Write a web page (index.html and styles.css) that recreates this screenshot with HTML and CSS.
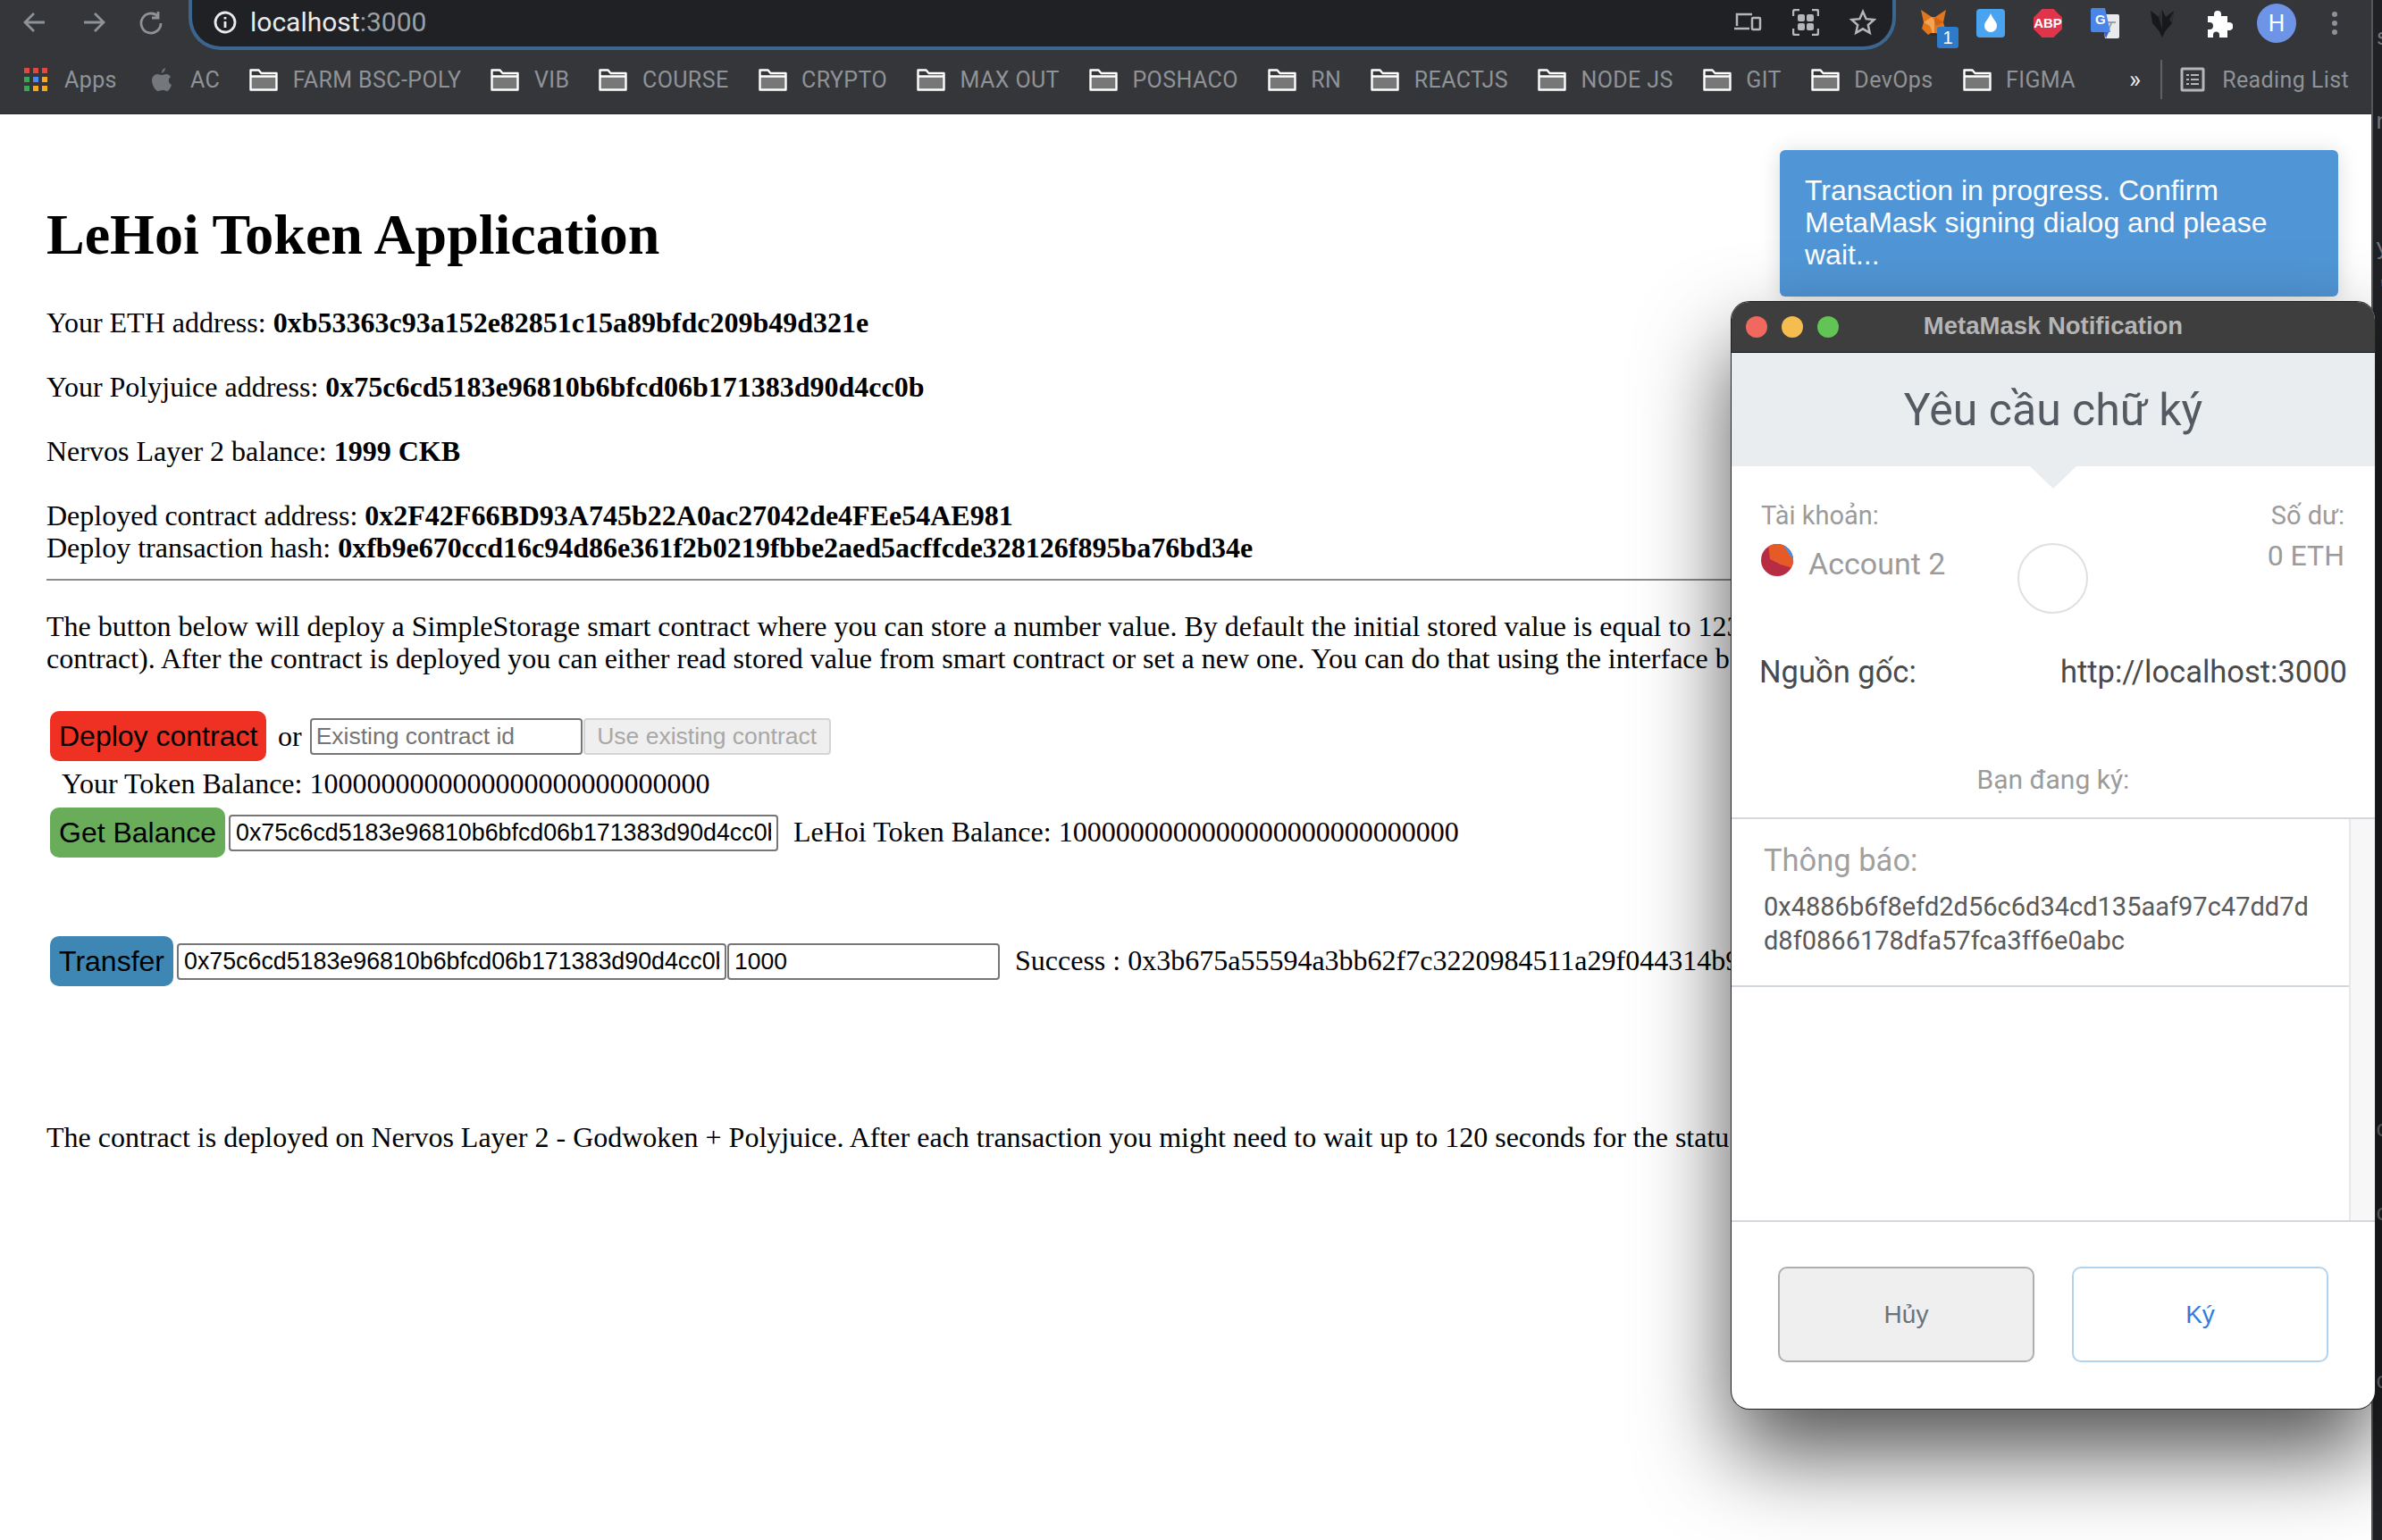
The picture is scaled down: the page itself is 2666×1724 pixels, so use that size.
FILE: index.html
```html
<!DOCTYPE html>
<html>

<head>
    <title>LeHoi Token Application</title>
    <link rel="stylesheet" href="styles.css">
</head>

<body>
    <div class="browser">
        <header class="toolbar">
            <svg class="nav-icon" width="26" height="26" viewBox="0 0 26 26"><path d="M24 13H3M12 3L2 13l10 10"/></svg>
            <svg class="nav-icon" width="26" height="26" viewBox="0 0 26 26"><path d="M2 13h21M14 3l10 10-10 10"/></svg>
            <svg class="nav-icon nav-reload" width="28" height="28" viewBox="0 0 28 28"><path d="M25 14a11 11 0 1 1-3.500-8M22 1v7h-7"/></svg>

            <div class="address-bar">
                <svg class="info-icon" width="26" height="26" viewBox="0 0 26 26"><circle cx="13" cy="13" r="11"/><path d="M13 12v7M13 7v2.500"/></svg>
                <span class="host">localhost<span class="port">:3000</span></span>
                <span class="address-tools">
                    <svg width="32" height="22" viewBox="0 0 32 22"><path class="tool-line" d="M4 15V2h17M1 18h17"/><rect class="tool-line" x="21" y="6" width="9" height="13" rx="1"/></svg>
                    <svg width="30" height="30" viewBox="0 0 30 30"><path class="tool-line" d="M1 8V3a2 2 0 0 1 2-2h5M22 1h5a2 2 0 0 1 2 2v5M29 22v5a2 2 0 0 1-2 2h-5M8 29H3a2 2 0 0 1-2-2v-5"/><rect class="tool-fill" x="6" y="6" width="8" height="8" rx="2"/><rect class="tool-fill" x="16" y="6" width="8" height="8" rx="2"/><rect class="tool-fill" x="6" y="16" width="8" height="8" rx="2"/><rect class="tool-fill" x="16" y="16" width="8" height="8" rx="2"/></svg>
                    <svg width="30" height="30" viewBox="0 0 30 30"><path class="tool-line" d="M15 3l3.600 8.200 8.900.9-6.700 5.900 1.900 8.800-7.700-4.500-7.700 4.500 1.900-8.800-6.700-5.900 8.900-.9z"/></svg>
                </span>
            </div>

            <div class="extensions">
                <span class="ext ext-fox">
                    <svg width="32" height="32" viewBox="0 0 32 32"><path fill="#e2761b" d="M2 1l12 8h4l12-8-3 14 2 7-7 7-3-2h-6l-3 2-7-7 2-7z"/><path fill="#f6a351" d="M14 9l-9 6 7 4 3 8h2V13z"/><path fill="#cd6116" d="M18 9l9 6-8 4-2-6z"/><path fill="#3a2a20" d="M13 27h6v3h-6z"/></svg>
                    <span class="ext-badge">1</span>
                </span>
                <span class="ext ext-drop">
                    <svg width="16" height="22" viewBox="0 0 16 22"><path fill="#fff" d="M8 0c2 6 7 9 7 14a7 7 0 0 1-14 0C1 9 6 6 8 0z"/></svg>
                </span>
                <span class="ext ext-abp">ABP</span>
                <span class="ext">
                    <svg width="32" height="34" viewBox="0 0 32 34"><path fill="#e8eaed" d="M12 7h18a2 2 0 0 1 2 2v23a2 2 0 0 1-2 2H16z"/><path fill="#9aa0a6" d="M18 15h10v2h-4l-3 7-2-1 3-6h-4z"/><path fill="#3a5fc8" d="M14 25h7l-4 9z"/><path fill="#4a86e8" d="M2 0h14l6 27H2a2 2 0 0 1-2-2V2a2 2 0 0 1 2-2z"/><text class="ext-g" x="5" y="18">G</text></svg>
                </span>
                <span class="ext">
                    <svg width="32" height="32" viewBox="0 0 32 32"><path fill="#17181a" d="M3 2l9 7 4-8 4 8 9-7-2 14-7 8-4 8-4-8-7-8z"/><path fill="#2e2f33" d="M12 9l4-8v22zM24 12l5-10-2 14z"/></svg>
                </span>
                <span class="ext ext-puzzle">
                    <svg width="30" height="32" viewBox="0 0 30 32"><path fill="#fff" d="M2 8h7V6a4 4 0 0 1 8 0v2h7v7h2a4.500 4.500 0 0 1 0 9h-2v8H15v-3a3.500 3.500 0 0 0-7 0v3H2v-9h2a4 4 0 0 0 0-8H2z"/></svg>
                </span>
                <span class="avatar">H</span>
                <span class="menu-dots"><i></i><i></i><i></i></span>
            </div>
        </header>

        <nav class="bookmarks">
            <span class="bookmark bookmark-apps">
                <svg width="26" height="26" viewBox="0 0 26 26"><path fill="#e8453c" d="M0 0h6v6H0zM10 0h6v6h-6zM20 0h6v6h-6z"/><path fill="#3aa757" d="M0 10h6v6H0z"/><path fill="#4a8af4" d="M10 10h6v6h-6z"/><path fill="#f5a623" d="M20 10h6v6h-6z"/><path fill="#3aa757" d="M0 20h6v6H0z"/><path fill="#f5a623" d="M10 20h6v6h-6zM20 20h6v6h-6z"/></svg>
                Apps
            </span>
            <span class="bookmark bookmark-apple">
                <svg width="22" height="26" viewBox="0 0 22 26"><path fill="#74777b" d="M15 0c0 3-2 5-4 6 0-3 1-5 4-6zM11 8c2 0 3-1 5-1s4 1 5 3c-3 2-3 7 1 9-1 3-3 7-5 7s-2-1-5-1-3 1-5 1c-3 0-7-7-7-12 0-4 3-7 6-7 2 0 3 1 5 1z"/></svg>
                AC
            </span>
            <span class="bookmark"><svg class="folder" width="32" height="25" viewBox="0 0 32 25"><use href="#folder"/></svg>FARM BSC-POLY</span>
            <span class="bookmark"><svg class="folder" width="32" height="25" viewBox="0 0 32 25"><use href="#folder"/></svg>VIB</span>
            <span class="bookmark"><svg class="folder" width="32" height="25" viewBox="0 0 32 25"><use href="#folder"/></svg>COURSE</span>
            <span class="bookmark"><svg class="folder" width="32" height="25" viewBox="0 0 32 25"><use href="#folder"/></svg>CRYPTO</span>
            <span class="bookmark"><svg class="folder" width="32" height="25" viewBox="0 0 32 25"><use href="#folder"/></svg>MAX OUT</span>
            <span class="bookmark"><svg class="folder" width="32" height="25" viewBox="0 0 32 25"><use href="#folder"/></svg>POSHACO</span>
            <span class="bookmark"><svg class="folder" width="32" height="25" viewBox="0 0 32 25"><use href="#folder"/></svg>RN</span>
            <span class="bookmark"><svg class="folder" width="32" height="25" viewBox="0 0 32 25"><use href="#folder"/></svg>REACTJS</span>
            <span class="bookmark"><svg class="folder" width="32" height="25" viewBox="0 0 32 25"><use href="#folder"/></svg>NODE JS</span>
            <span class="bookmark"><svg class="folder" width="32" height="25" viewBox="0 0 32 25"><use href="#folder"/></svg>GIT</span>
            <span class="bookmark"><svg class="folder" width="32" height="25" viewBox="0 0 32 25"><use href="#folder"/></svg>DevOps</span>
            <span class="bookmark"><svg class="folder" width="32" height="25" viewBox="0 0 32 25"><use href="#folder"/></svg>FIGMA</span>
            <span class="more">&raquo;</span>
            <span class="bookmark bookmark-reading">
                <svg width="28" height="28" viewBox="0 0 28 28"><rect x="2" y="2" width="24" height="24" rx="1" fill="none" stroke="#b4b6b8" stroke-width="3"/><path fill="#b4b6b8" d="M7 8h3v2H7zM12 8h9v2h-9zM7 13h3v2H7zM12 13h9v2h-9zM7 18h3v2H7zM12 18h9v2h-9z"/></svg>
                Reading List
            </span>
        </nav>

        <main class="page">
            <h1 class="page-title">LeHoi Token Application</h1>

            <div class="info-line">Your ETH address: <b>0xb53363c93a152e82851c15a89bfdc209b49d321e</b></div>
            <div class="info-line">Your Polyjuice address: <b>0x75c6cd5183e96810b6bfcd06b171383d90d4cc0b</b></div>
            <div class="info-line">Nervos Layer 2 balance: <b>1999 CKB</b></div>
            <div>Deployed contract address: <b>0x2F42F66BD93A745b22A0ac27042de4FEe54AE981</b></div>
            <div>Deploy transaction hash: <b>0xfb9e670ccd16c94d86e361f2b0219fbbe2aed5acffcde328126f895ba76bd34e</b></div>

            <hr class="rule">

            <p class="intro">
                The button below will deploy a SimpleStorage smart contract where you can store a number value. By default the initial stored value is equal to 123<br>
                contract). After the contract is deployed you can either read stored value from smart contract or set a new one. You can do that using the interface b
            </p>

            <div class="action-row action-deploy">
                <button class="btn btn-red">Deploy contract</button>
                <span class="or">or</span>
                <input class="field field-contract" placeholder="Existing contract id">
                <button class="btn-disabled" disabled>Use existing contract</button>
            </div>

            <div class="token-balance">Your Token Balance: 1000000000000000000000000000</div>

            <div class="action-row action-balance">
                <button class="btn btn-green">Get Balance</button>
                <input class="field field-address" value="0x75c6cd5183e96810b6bfcd06b171383d90d4cc0b">
                <span class="row-text">LeHoi Token Balance: 1000000000000000000000000000</span>
            </div>

            <div class="action-row action-transfer">
                <button class="btn btn-blue">Transfer</button>
                <input class="field field-address" value="0x75c6cd5183e96810b6bfcd06b171383d90d4cc0b">
                <input class="field field-amount" value="1000">
                <span class="row-text">Success : 0x3b675a55594a3bb62f7c3220984511a29f044314b9</span>
            </div>

            <p class="status-note">The contract is deployed on Nervos Layer 2 - Godwoken + Polyjuice. After each transaction you might need to wait up to 120 seconds for the statu</p>
        </main>
    </div>

    <div class="edge">s

ng


y
'



















c

c



c</div>

    <div class="toast">Transaction in progress. Confirm MetaMask signing dialog and please wait...</div>

    <section class="mm-window">
        <div class="mm-titlebar">
            <span class="light light-red"></span>
            <span class="light light-yellow"></span>
            <span class="light light-green"></span>
            <span class="mm-title">MetaMask Notification</span>
        </div>

        <div class="mm-head">Yêu cầu chữ ký</div>

        <div class="mm-account">
            <div>
                <div class="mm-label">Tài khoản:</div>
                <div class="mm-account-name">
                    <svg width="36" height="36" viewBox="0 0 36 36"><defs><clipPath id="blockie"><ellipse cx="18" cy="18" rx="18" ry="18"/></clipPath></defs><g clip-path="url(#blockie)"><path fill="#b72b43" d="M0 0h36v36H0z"/><path fill="#e65a28" d="M8 0h28v27l-14-4-12-6z"/><path fill="#4a90e2" d="M24 0h12v18z"/></g></svg>
                    <span class="mm-account-text">Account 2</span>
                </div>
            </div>
            <div class="mm-circle"></div>
            <div class="mm-balance">
                <div class="mm-label">Số dư:</div>
                <div class="mm-eth">0 ETH</div>
            </div>
        </div>

        <div class="mm-origin">
            <span>Nguồn gốc:</span>
            <span>http://localhost:3000</span>
        </div>

        <div class="mm-signing">Bạn đang ký:</div>

        <div class="mm-body">
            <div class="mm-content">
                <div class="mm-message">
                    <div class="mm-message-label">Thông báo:</div>
                    <div class="mm-hex">0x4886b6f8efd2d56c6d34cd135aaf97c47dd7d<br>d8f0866178dfa57fca3ff6e0abc</div>
                </div>
            </div>
            <div class="mm-scroll"></div>
        </div>

        <div class="mm-footer">
            <button class="mm-btn mm-cancel">Hủy</button>
            <button class="mm-btn mm-sign">Ký</button>
        </div>
    </section>

    <svg class="sprites" width="0" height="0">
        <symbol id="folder" viewBox="0 0 32 25">
            <path fill="#777" d="M1.500 8h29v15.500h-29z"/>
            <path fill="none" stroke="#fff" stroke-width="2.400" stroke-linejoin="round" d="M1.500 1.500h9l3 3.500h17v18.500h-29zM1.500 8.500h29"/>
        </symbol>
    </svg>
</body>

</html>
```

FILE: styles.css
```css
* {
    box-sizing: border-box;
}

html,
body {
    margin: 0;
    padding: 0;
    height: 1724px;
    overflow: hidden;
}

body {
    display: flex;
    position: relative;
    width: 2666px;
    background: #202124;
    font-family: "Liberation Serif", serif;
    font-size: 32px;
    line-height: 36px;
    color: #000;
}

.sprites {
    position: absolute;
}

.browser {
    display: flex;
    flex-direction: column;
    width: 2656px;
    height: 1724px;
    border-right: 2px solid #55565a;
}

.edge {
    flex: 1;
    padding: 20px 0 0 3px;
    overflow: hidden;
    color: #74787e;
    font: 26px/47px "Liberation Mono", monospace;
    white-space: pre;
}

/* chrome toolbar */
.toolbar {
    display: flex;
    align-items: flex-start;
    height: 56px;
    background: #35363a;
}

.nav-icon {
    margin: 12px 14px 0 26px;
    flex: none;
}

.nav-reload {
    margin-left: 23px;
    margin-right: 17px;
}

.nav-icon path,
.info-icon path,
.info-icon circle {
    fill: none;
    stroke: #8e9196;
    stroke-width: 2.800;
}

.address-bar {
    display: flex;
    align-items: center;
    flex: none;
    width: 1911px;
    height: 56px;
    margin-left: 11px;
    padding: 0 18px 3px 24px;
    background: #202124;
    border: 4px solid #3b6690;
    border-top: none;
    border-radius: 0 0 36px 36px;
}

.info-icon path,
.info-icon circle {
    stroke: #e8eaed;
}

.host {
    margin-left: 15px;
    font: 30px Roboto, sans-serif;
    color: #e8eaed;
}

.port {
    color: #9aa0a6;
}

.address-tools {
    display: flex;
    align-items: center;
    gap: 34px;
    margin-left: auto;
}

.tool-line {
    fill: none;
    stroke: #b4b6b8;
    stroke-width: 2.500;
}

.tool-fill {
    fill: #b4b6b8;
}

.extensions {
    display: flex;
    align-items: center;
    position: relative;
    height: 52px;
    margin-left: 26px;
}

.ext {
    display: flex;
    align-items: center;
    justify-content: center;
    position: relative;
    width: 32px;
    height: 32px;
    margin-right: 32px;
    flex: none;
}

.ext-badge {
    position: absolute;
    left: 20px;
    top: 20px;
    width: 24px;
    height: 24px;
    border-radius: 3px;
    background: #2f7bcb;
    color: #fff;
    font: 20px/24px "Liberation Sans", sans-serif;
    text-align: center;
}

.ext-drop {
    background: #4aa3ee;
    border-radius: 4px;
}

.ext-abp {
    background: #e0344b;
    color: #fff;
    font: bold 15px/32px "Liberation Sans", sans-serif;
    clip-path: polygon(30% 0, 70% 0, 100% 30%, 100% 70%, 70% 100%, 30% 100%, 0 70%, 0 30%);
}

.ext-g {
    fill: #fff;
    font: bold 15px "Liberation Sans", sans-serif;
}

.ext-puzzle {
    margin-right: 26px;
}

.avatar {
    flex: none;
    width: 44px;
    height: 44px;
    border-radius: 50%;
    background: #6d94e6;
    color: #fff;
    font: 26px/44px Roboto, sans-serif;
    text-align: center;
}

.menu-dots {
    display: flex;
    flex-direction: column;
    gap: 4px;
    margin-left: 40px;
}

.menu-dots i {
    width: 6px;
    height: 6px;
    border-radius: 50%;
    background: #8e9196;
}

/* bookmark bar */
.bookmarks {
    display: flex;
    align-items: center;
    gap: 33px;
    height: 72px;
    padding: 0 0 5px 27px;
    background: #35363a;
    border-bottom: 1px solid #2a2b2e;
}

.bookmark {
    display: flex;
    align-items: center;
    gap: 16.500px;
    flex: none;
    font: 25px Roboto, sans-serif;
    letter-spacing: 0.4px;
    color: #8f9397;
}

.bookmark-apps {
    gap: 19px;
}

.bookmark-apple {
    margin-left: 6px;
    gap: 21px;
}

.folder {
    flex: none;
}

.more {
    margin-left: 27px;
    padding-right: 22px;
    border-right: 2px solid #5f6164;
    font: 28px/44px Roboto, sans-serif;
    color: #e8eaed;
}

.bookmark-reading {
    margin-left: -13px;
    gap: 19px;
}

/* page */
.page {
    flex: 1;
    padding: 98px 0 0 52px;
    background: #fff;
    overflow: hidden;
}

.page-title {
    margin: 0 0 43px;
    font-size: 64px;
    line-height: 74px;
}

.info-line {
    margin-bottom: 36px;
}

.rule {
    margin: 17px 0 33px;
    height: 2px;
    border: none;
    background: #8c8c8c;
}

/* these run under the popup window, so cut them where it starts */
.intro,
.action-row,
.status-note {
    width: 1886px;
    overflow: hidden;
    white-space: nowrap;
}

.intro {
    margin: 0 0 41px;
}

.action-row {
    display: flex;
    align-items: center;
    height: 56px;
    padding-left: 4px;
}

.btn {
    height: 56px;
    padding: 0 10px;
    border: none;
    border-radius: 10px;
    color: #000;
    font: 32px "Liberation Sans", sans-serif;
    flex: none;
}

.btn-red {
    width: 242px;
    background: #ef3124;
}

.btn-green {
    width: 196px;
    background: #69ad5b;
}

.btn-blue {
    width: 138px;
    background: #3e87b5;
}

.or {
    margin: 0 9px 0 13px;
}

.field {
    height: 41px;
    padding: 0 6px;
    border: 2px solid #767676;
    border-radius: 4px;
    background: #fff;
    color: #000;
    font: 26.500px "Liberation Sans", sans-serif;
    flex: none;
}

.field::placeholder {
    color: #757575;
}

.field-contract {
    width: 305px;
    padding: 0 5px;
}

.field-address {
    width: 615px;
    margin-left: 4px;
    font-size: 26.800px;
}

.field-amount {
    width: 305px;
    margin-left: 1px;
}

.btn-disabled {
    width: 277px;
    height: 41px;
    margin-left: 1px;
    padding: 0;
    border: 2px solid #d4d4d4;
    border-radius: 4px;
    background: #efefef;
    color: #a8a8a8;
    font: 26.500px "Liberation Sans", sans-serif;
    flex: none;
}

.row-text {
    margin-left: 17px;
    padding-bottom: 3px;
}

.token-balance {
    margin: 7px 0 9px;
    padding-left: 17px;
}

.action-transfer {
    margin-top: 88px;
}

.status-note {
    margin: 151px 0 0;
}

/* toast */
.toast {
    position: absolute;
    left: 1992px;
    top: 168px;
    width: 625px;
    height: 164px;
    padding: 27px 28px;
    background: #5096d6;
    border-radius: 6px;
    box-shadow: 0 2px 24px rgba(0, 0, 0, 0.14);
    color: #fff;
    font: 32px/36px "Liberation Sans", sans-serif;
}

/* metamask popup window */
.mm-window {
    position: absolute;
    left: 1938px;
    top: 338px;
    width: 720px;
    height: 1239px;
    background: #fff;
    border-radius: 20px;
    box-shadow: 0 0 0 1px #222, 0 50px 100px rgba(0, 0, 0, 0.68);
    overflow: hidden;
    font-family: Roboto, sans-serif;
}

.mm-titlebar {
    display: flex;
    align-items: center;
    gap: 16px;
    position: relative;
    height: 57px;
    padding-left: 16px;
    background: #3e3e3e;
    border-bottom: 1px solid #111;
}

.light {
    width: 24px;
    height: 24px;
    border-radius: 50%;
}

.light-red {
    background: #f1685e;
}

.light-yellow {
    background: #f5bd4f;
}

.light-green {
    background: #61c454;
}

.mm-title {
    position: absolute;
    left: 0;
    right: 0;
    padding-bottom: 3px;
    text-align: center;
    font: bold 27.500px "Liberation Sans", sans-serif;
    color: #b5b5b5;
}

.mm-head {
    position: relative;
    height: 127px;
    padding-top: 36px;
    background: #e9edf0;
    color: #535a61;
    font-size: 50px;
    line-height: 56px;
    text-align: center;
}

.mm-head::after {
    content: "";
    position: absolute;
    left: 334px;
    bottom: -25px;
    border-top: 25px solid #e9edf0;
    border-left: 26px solid transparent;
    border-right: 26px solid transparent;
}

.mm-account {
    display: grid;
    grid-template-columns: 1fr 79px 1fr;
    height: 165px;
    padding: 38px 34px 0 33px;
    color: #9b9b9b;
}

.mm-label {
    font-size: 29px;
    line-height: 34px;
}

.mm-account-name {
    display: flex;
    align-items: center;
    gap: 17px;
    margin-top: 11px;
    font-size: 34px;
}

.mm-account-text {
    padding-top: 8px;
}

.mm-circle {
    width: 79px;
    height: 79px;
    margin-top: 48px;
    border: 2px solid #e0e0e0;
    border-radius: 50%;
}

.mm-balance {
    text-align: right;
}

.mm-eth {
    margin-top: 10px;
    font-size: 32px;
}

.mm-origin {
    display: flex;
    justify-content: space-between;
    margin-top: 45px;
    padding: 0 31px;
    color: #4a4a4a;
    font-size: 34.500px;
    line-height: 40px;
}

.mm-signing {
    margin-top: 84px;
    color: #9b9b9b;
    font-size: 30px;
    line-height: 34px;
    text-align: center;
}

.mm-body {
    display: flex;
    height: 451px;
    margin-top: 25px;
    border-top: 2px solid #d2d8dd;
}

.mm-content {
    flex: 1;
}

.mm-scroll {
    width: 29px;
    background: #f7f7f7;
    border-left: 2px solid #e8e8e8;
}

.mm-message {
    padding: 28px 36px 31px;
    border-bottom: 2px solid #d2d8dd;
}

.mm-message-label {
    margin-bottom: 15px;
    color: #a0a0a0;
    font-size: 34.500px;
    line-height: 36px;
}

.mm-hex {
    color: #5a5a5a;
    font-size: 29px;
    line-height: 38px;
    white-space: nowrap;
}

.mm-footer {
    display: flex;
    gap: 42px;
    padding: 50px 0 0 52px;
    border-top: 2px solid #d2d8dd;
}

.mm-btn {
    width: 287px;
    height: 107px;
    padding-top: 2px;
    border-radius: 10px;
    background: #fff;
    font: 28px "Liberation Sans", sans-serif;
}

.mm-cancel {
    border: 2px solid #aeaeae;
    background: #efefef;
    color: #6a737d;
}

.mm-sign {
    border: 2px solid #b0d4f0;
    color: #2f7ed8;
}
```
